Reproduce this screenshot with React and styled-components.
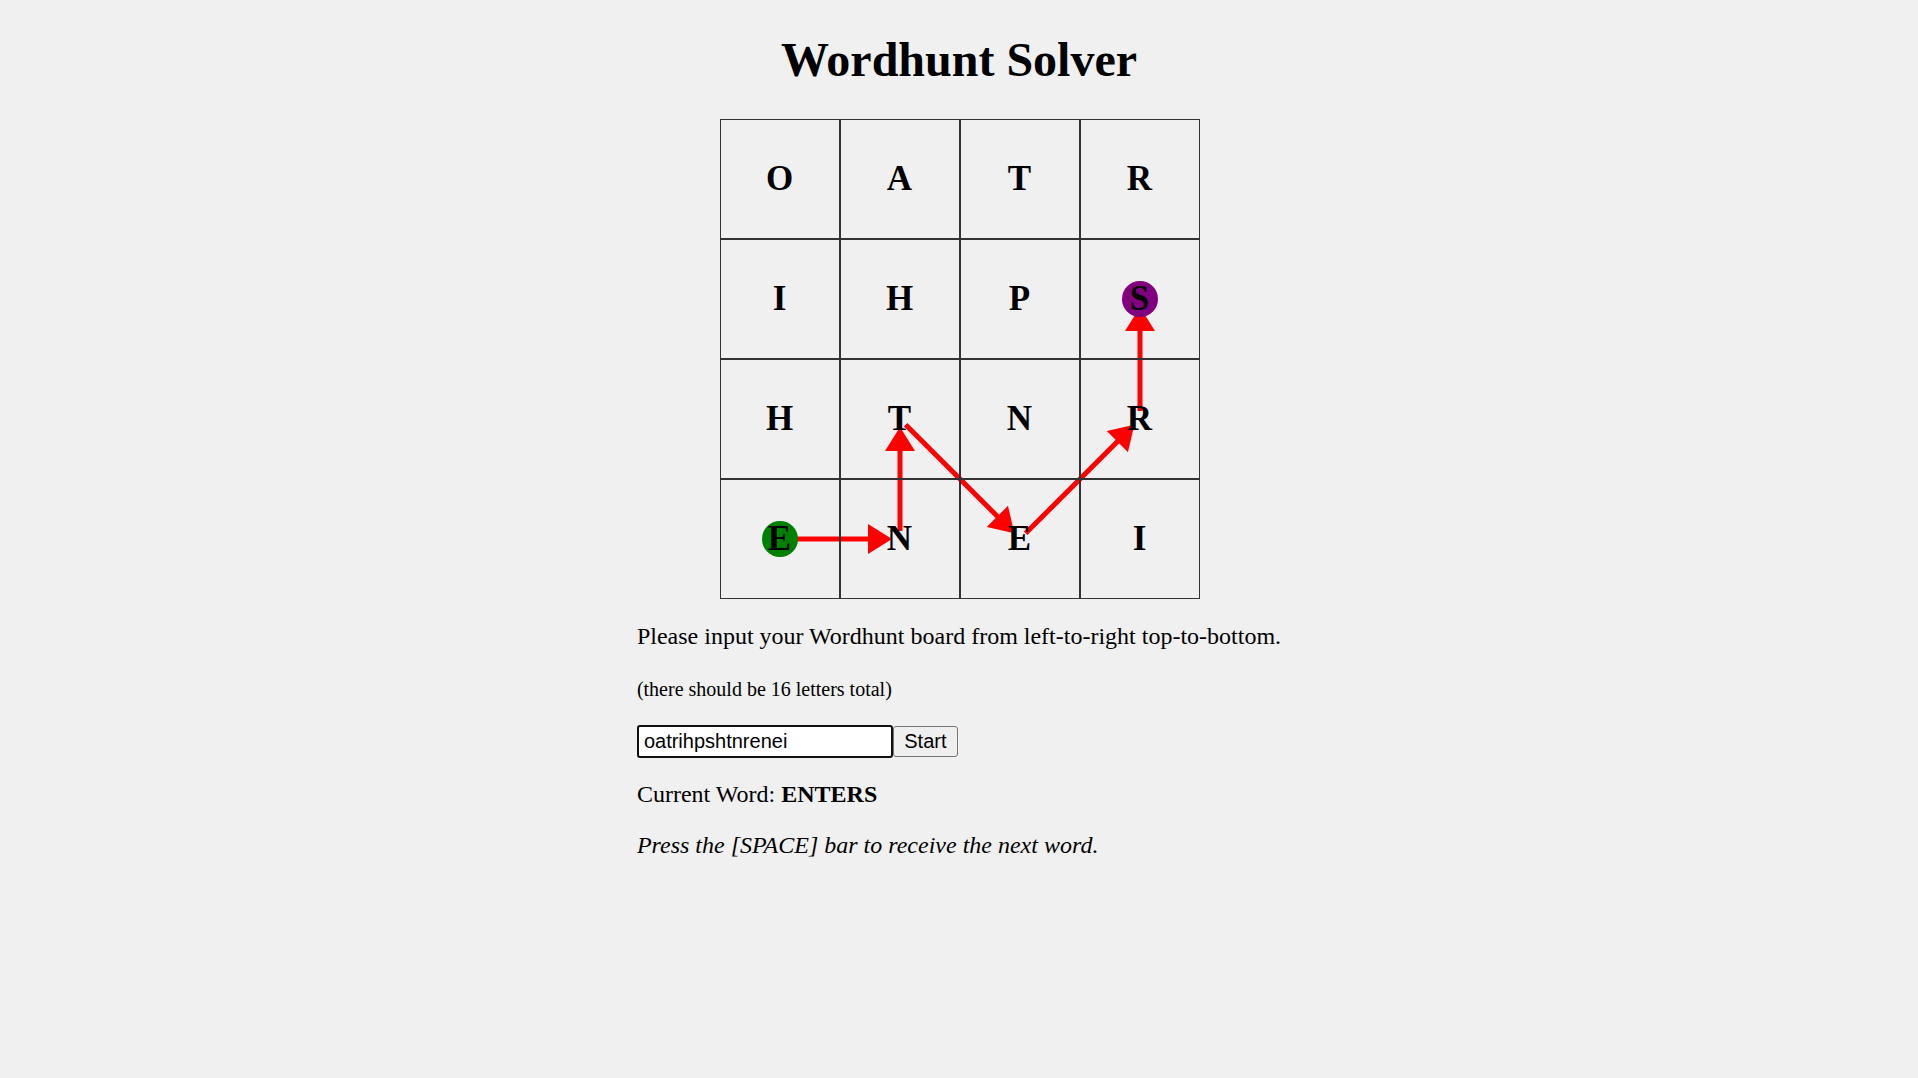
import { useState } from "react";
import styled, { createGlobalStyle } from "styled-components";

const CELL = 120;
const BOARD = "oatrihpshtnrenei";
// cells of the current word, as [row, col]
const PATH = [
  [3, 0],
  [3, 1],
  [2, 1],
  [3, 2],
  [2, 3],
  [1, 3],
];

const GlobalStyle = createGlobalStyle`
  html, body {
    margin: 0;
    padding: 0;
    background: #f0f0f0;
  }
  body {
    font-family: "Liberation Serif", "Times New Roman", serif;
    color: #000;
  }
`;

const Page = styled.div`
  min-height: 100vh;
  display: flex;
  flex-direction: column;
  align-items: center;
`;

const Title = styled.h1`
  margin: 32px 0 31px;
  font-size: 48px;
  line-height: 56px;
  font-weight: 700;
`;

const Board = styled.div`
  position: relative;
  margin-left: 1px;
  display: grid;
  grid-template-columns: repeat(4, ${CELL}px);
  grid-template-rows: repeat(4, ${CELL}px);
`;

const Cell = styled.div`
  position: relative;
  z-index: 1;
  box-sizing: border-box;
  border: 1px solid #333;
  display: flex;
  align-items: center;
  justify-content: center;
  font-size: 35px;
  font-weight: 700;
  line-height: 40px;
`;

const Overlay = styled.svg`
  position: absolute;
  inset: 0;
  z-index: 0;
  pointer-events: none;
`;

const Info = styled.div`
  display: flex;
  flex-direction: column;
  align-items: flex-start;
  font-size: 24px;
  line-height: 28px;
`;

const Instructions = styled.p`
  margin: 23px 0 0;
`;

const Hint = styled.p`
  margin: 27px 0 0;
  font-size: 20px;
  line-height: 24px;
`;

const InputRow = styled.div`
  margin-top: 24px;
  display: flex;
  align-items: center;
`;

const BoardInput = styled.input`
  box-sizing: border-box;
  width: 256px;
  height: 33px;
  padding: 1px 5px;
  border: 2px solid #101010;
  border-radius: 3px;
  background: #fff;
  font-family: "Liberation Sans", Arial, sans-serif;
  font-size: 20px;
  color: #000;
  outline: none;
`;

const StartButton = styled.button`
  box-sizing: border-box;
  width: 65px;
  height: 31px;
  padding: 0 6px;
  border: 1.5px solid #767676;
  border-radius: 3px;
  background: #efefef;
  font-family: "Liberation Sans", Arial, sans-serif;
  font-size: 20px;
  color: #000;
`;

const CurrentWord = styled.p`
  margin: 22px 0 0;
`;

const Prompt = styled.p`
  margin: 23px 0 0;
  font-style: italic;
`;

const center = ([r, c]) => [c * CELL + CELL / 2, r * CELL + CELL / 2];

function Arrow({ from, to }) {
  const [ax, ay] = center(from);
  const [bx, by] = center(to);
  const len = Math.hypot(bx - ax, by - ay);
  const ux = (bx - ax) / len;
  const uy = (by - ay) / len;
  const nx = -uy;
  const ny = ux;
  const inset = 8;
  const head = 24;
  const half = 15;
  const sx = ax + ux * inset;
  const sy = ay + uy * inset;
  const tx = bx - ux * inset;
  const ty = by - uy * inset;
  const baseX = tx - ux * head;
  const baseY = ty - uy * head;
  const pts = [
    [tx, ty],
    [baseX + nx * half, baseY + ny * half],
    [baseX - nx * half, baseY - ny * half],
  ]
    .map((p) => p.join(","))
    .join(" ");
  return (
    <g>
      <line
        x1={sx}
        y1={sy}
        x2={baseX + ux * 2}
        y2={baseY + uy * 2}
        stroke="#ff0000"
        strokeWidth="5"
      />
      <polygon points={pts} fill="#ff0000" />
    </g>
  );
}

export default function App() {
  const [board, setBoard] = useState(BOARD);
  const letters = BOARD.toUpperCase().split("");
  const first = center(PATH[0]);
  const last = center(PATH[PATH.length - 1]);

  return (
    <Page>
      <GlobalStyle />
      <Title>Wordhunt Solver</Title>
      <Board>
        <Overlay width={CELL * 4} height={CELL * 4}>
          {PATH.slice(1).map((cell, i) => (
            <Arrow key={i} from={PATH[i]} to={cell} />
          ))}
          <circle cx={first[0]} cy={first[1]} r="18" fill="#008000" />
          <circle cx={last[0]} cy={last[1]} r="18" fill="#800080" />
        </Overlay>
        {letters.map((l, i) => (
          <Cell key={i}>{l}</Cell>
        ))}
      </Board>
      <Info>
        <Instructions>
          Please input your Wordhunt board from left-to-right top-to-bottom.
        </Instructions>
        <Hint>(there should be 16 letters total)</Hint>
        <InputRow>
          <BoardInput
            value={board}
            onChange={(e) => setBoard(e.target.value)}
          />
          <StartButton>Start</StartButton>
        </InputRow>
        <CurrentWord>
          Current Word: <b>ENTERS</b>
        </CurrentWord>
        <Prompt>Press the [SPACE] bar to receive the next word.</Prompt>
      </Info>
    </Page>
  );
}
